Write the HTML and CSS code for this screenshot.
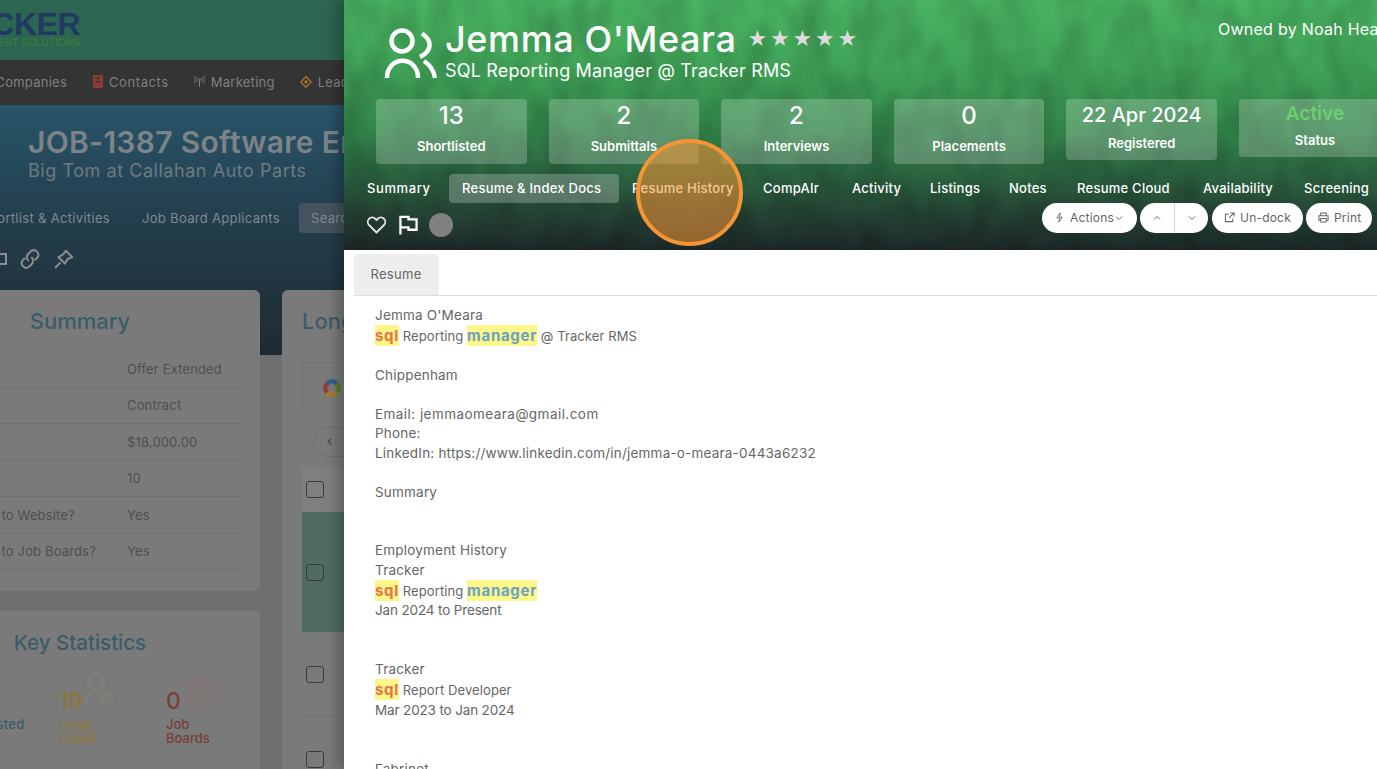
FILE: index.html
```html
<!DOCTYPE html>
<html lang="en">
<head>
<meta charset="utf-8">
<title>Jemma O'Meara</title>
<link rel="stylesheet" href="styles.css">
</head>
<body>
<div class="page">
  <div class="topbar">
    <div class="logo"><span class="logo-main">TRACKER</span><span class="logo-sub">RECRUITMENT SOLUTIONS</span></div>
  </div>
  <nav class="mainnav">
    <span class="nav-cut">Companies</span>
    <span class="nav-item nav-contacts"><svg class="nav-ic" viewBox="0 0 12 14"><path fill="#8d3a36" d="M1 0h10a1 1 0 0 1 1 1v12a1 1 0 0 1-1 1H1zM3.500 3v1.500h5V3zM3.500 6.500V8h5V6.500z"/></svg><span class="nav-wide">Contacts</span></span>
    <span class="nav-item nav-marketing"><svg class="nav-ic" viewBox="0 0 12 12" fill="none" stroke="#8a8a8a" stroke-width="1"><circle cx="6" cy="4" r="1"/><path d="M6 5v7M3.500 1.500a3.500 3.500 0 0 0 0 5M8.500 1.500a3.500 3.500 0 0 1 0 5M1.500 0a6 6 0 0 0 0 8M10.500 0a6 6 0 0 1 0 8"/></svg>Marketing</span>
    <span class="nav-item nav-leads"><svg class="nav-ic nav-ic-lg" viewBox="0 0 12 12" fill="none" stroke="#b0752a" stroke-width="1.300"><path d="M6 .8 11.200 6 6 11.200.8 6z"/><circle cx="6" cy="6" r="1"/></svg>Leads</span>
  </nav>
  <header class="banner">
    <h1 class="job-title">JOB-1387 Software Engineer</h1>
    <p class="job-sub">Big Tom at Callahan Auto Parts</p>
    <div class="job-tabs">
      <span class="job-tab-cut">Shortlist &amp; Activities</span>
      <span class="job-tab">Job Board Applicants</span>
      <span class="job-tab job-tab-on">Search</span>
    </div>
    <div class="job-icons">
      <span class="job-square"></span>
      <svg class="job-ic" viewBox="0 0 24 24" fill="none" stroke="#8a8e91" stroke-width="2.200" stroke-linecap="round"><path d="M10 13.500a5 5 0 0 1 0-7l3-3a5 5 0 0 1 7 7l-2 2"/><path d="M14 10.500a5 5 0 0 1 0 7l-3 3a5 5 0 0 1-7-7l2-2"/></svg>
      <svg class="job-ic" viewBox="0 0 24 24" fill="none" stroke="#8a8e91" stroke-width="2.200" stroke-linejoin="round" stroke-linecap="round"><path d="M14 3l7 7-5 2-3 5-7-7 5-3zM7.500 16.500 3 21"/></svg>
    </div>
  </header>
  <div class="main">
    <div class="col-left">
      <section class="card card-summary">
        <h2 class="card-title">Summary</h2>
        <div class="row"><span class="r-label"></span><span>Offer Extended</span></div>
        <div class="row"><span class="r-label"></span><span>Contract</span></div>
        <div class="row"><span class="r-label"></span><span>$18,000.00</span></div>
        <div class="row"><span class="r-label"></span><span>10</span></div>
        <div class="row"><span class="r-label">Post to Website?</span><span>Yes</span></div>
        <div class="row"><span class="r-label">Post to Job Boards?</span><span>Yes</span></div>
      </section>
      <section class="card card-stats">
        <h2 class="card-title card-title-key">Key Statistics</h2>
        <div class="kstats">
          <div class="kstat k-blue"><span class="k-lab">Shortlisted</span></div>
          <div class="kstat k-yellow">
            <b class="k-num">19</b><span class="k-lab">Long<br>Listed</span>
            <svg class="k-wm k-wm-keys" viewBox="0 0 30 36" fill="none" stroke="#807f78" stroke-width="3"><circle cx="13" cy="9" r="7.500"/><path d="M9 16 1 31"/><circle cx="24" cy="26" r="4.500"/><path d="M17 15l4 7"/></svg>
          </div>
          <div class="kstat k-red">
            <b class="k-num">0</b><span class="k-lab">Job<br>Boards</span>
            <svg class="k-wm k-wm-card" viewBox="0 0 30 33"><path fill="#7f7775" d="M2 0h26a2 2 0 0 1 2 2v26a2 2 0 0 1-2 2H18l-3 3-3-3H2a2 2 0 0 1-2-2V2a2 2 0 0 1 2-2z"/><circle cx="15" cy="11" r="4.500" fill="none" stroke="#757575" stroke-width="2"/><path d="M6 25c1-8 17-8 18 0" fill="none" stroke="#757575" stroke-width="2"/></svg>
          </div>
        </div>
      </section>
    </div>
    <section class="card card-long">
      <h2 class="card-title card-title-left">Long Listed</h2>
      <div class="filter"><span class="ring"><span class="ring-hole"></span></span></div>
      <div class="pager"><span class="pager-btn">‹</span></div>
      <div class="t-row t-head"><span class="check"></span></div>
      <div class="t-row t-sel"><span class="check"></span></div>
      <div class="t-row t-plain"><span class="check"></span></div>
      <div class="t-row t-plain"><span class="check"></span></div>
    </section>
  </div>
</div>

<aside class="drawer">
  <header class="d-head">
    <svg class="crowd" width="1033" height="250" aria-hidden="true">
      <defs>
        <filter id="mottle" x="0" y="0" width="100%" height="100%" color-interpolation-filters="sRGB">
          <feTurbulence type="fractalNoise" baseFrequency="0.035 0.02" numOctaves="2" seed="7"/>
          <feColorMatrix type="matrix" values="0 0 0 0 0  0 0 0 0 0  0 0 0 0 0  .34 0 0 0 -.12"/>
        </filter>
      </defs>
      <rect width="1033" height="250" filter="url(#mottle)"/>
    </svg>
    <div class="d-top">
      <svg class="d-person" viewBox="0 0 60 60" fill="none" stroke="#fff" stroke-width="4.500" stroke-linecap="butt"><circle cx="22" cy="16" r="10.500"/><path d="M42 8.500C53 16 52 26 40 32"/><path d="M7 53C7 30 38 30 38 53"/><path d="M44 36c6 4 10 10 11 17"/></svg>
      <div class="d-id">
        <div class="d-name-row"><h1 class="d-name">Jemma O'Meara</h1><span class="stars">★★★★★</span></div>
        <p class="d-role">SQL Reporting Manager @ Tracker RMS</p>
      </div>
      <span class="d-owner">Owned by Noah Heath</span>
    </div>
    <div class="tiles">
      <div class="tile"><b class="t-num">13</b><span class="t-lab">Shortlisted</span></div>
      <div class="tile"><b class="t-num">2</b><span class="t-lab">Submittals</span></div>
      <div class="tile"><b class="t-num">2</b><span class="t-lab">Interviews</span></div>
      <div class="tile"><b class="t-num">0</b><span class="t-lab">Placements</span></div>
      <div class="tile tile-date"><b class="t-num">22 Apr 2024</b><span class="t-lab">Registered</span></div>
      <div class="tile tile-status"><b class="t-num">Active</b><span class="t-lab">Status</span></div>
    </div>
    <nav class="d-tabs">
      <span class="d-tab">Summary</span>
      <span class="d-tab d-tab-on">Resume &amp; Index Docs</span>
      <span class="d-tab">Resume History</span>
      <span class="d-tab">CompAIr</span>
      <span class="d-tab">Activity</span>
      <span class="d-tab">Listings</span>
      <span class="d-tab">Notes</span>
      <span class="d-tab">Resume Cloud</span>
      <span class="d-tab">Availability</span>
      <span class="d-tab">Screening</span>
    </nav>
    <div class="d-tools">
      <div class="d-icons">
        <svg class="ic-heart" viewBox="0 0 24 24" fill="none" stroke="#e4e4e4" stroke-width="2.200" stroke-linejoin="round"><path d="M12 21 3 12a5.500 5.500 0 0 1 0-7.500 5.300 5.300 0 0 1 7.500 0L12 6l1.500-1.500a5.300 5.300 0 0 1 7.500 0 5.500 5.500 0 0 1 0 7.500z"/></svg>
        <svg class="ic-flag" viewBox="0 0 20 20" fill="none" stroke="#fff" stroke-width="2.400"><path d="M1.500 20V1.500h8.500v2.500h8.500v11H10v-2.500H1.500"/></svg>
        <span class="ic-dot"></span>
      </div>
      <div class="d-btns">
        <span class="pill pill-actions"><svg class="b-ic" viewBox="0 0 12 14" fill="none" stroke="#666" stroke-width="1.100" stroke-linejoin="round"><path d="M7 1 2.500 7.500H6L5 13l4.500-6.500H6z"/></svg>Actions<svg class="b-chev" viewBox="0 0 8 8" fill="none" stroke="#666" stroke-width="1"><path d="M1 2.500 4 5.500 7 2.500"/></svg></span>
        <span class="pill-group"><span class="pg-btn"><svg class="b-chev" viewBox="0 0 8 8" fill="none" stroke="#666" stroke-width="1"><path d="M1 5.500 4 2.500 7 5.500"/></svg></span><span class="pg-btn pg-right"><svg class="b-chev" viewBox="0 0 8 8" fill="none" stroke="#666" stroke-width="1"><path d="M1 2.500 4 5.500 7 2.500"/></svg></span></span>
        <span class="pill pill-undock"><svg class="b-ic" viewBox="0 0 12 12" fill="none" stroke="#666" stroke-width="1.100"><path d="M9.500 7v3.500h-8v-8H5M7 1h4v4M11 1 5.500 6.500"/></svg>Un-dock</span>
        <span class="pill pill-print"><svg class="b-ic" viewBox="0 0 12 12" fill="none" stroke="#666" stroke-width="1.100"><path d="M3 4V1h6v3M3 9H1V4h10v5H9M3 7h6v4H3z"/></svg>Print</span>
      </div>
    </div>
  </header>
  <div class="d-body">
    <div class="doc-tabs"><span class="doc-tab">Resume</span></div>
    <div class="doc">
      <div class="ln">Jemma O'Meara</div>
      <div class="ln ln-hl"><mark class="hl hl-a">sql</mark> Reporting <mark class="hl hl-b">manager</mark> @ Tracker RMS</div>
      <div class="ln"></div>
      <div class="ln">Chippenham</div>
      <div class="ln"></div>
      <div class="ln ln-wide">Email: jemmaomeara@gmail.com</div>
      <div class="ln">Phone:</div>
      <div class="ln">LinkedIn: https://www.linkedin.com/in/jemma-o-meara-0443a6232</div>
      <div class="ln"></div>
      <div class="ln">Summary</div>
      <div class="ln"></div>
      <div class="ln"></div>
      <div class="ln">Employment History</div>
      <div class="ln">Tracker</div>
      <div class="ln ln-hl"><mark class="hl hl-a">sql</mark> Reporting <mark class="hl hl-b">manager</mark></div>
      <div class="ln ln-num">Jan 2024 to Present</div>
      <div class="ln"></div>
      <div class="ln"></div>
      <div class="ln">Tracker</div>
      <div class="ln ln-hl ln-hl2"><mark class="hl hl-a">sql</mark> Report Developer</div>
      <div class="ln ln-num">Mar 2023 to Jan 2024</div>
      <div class="ln"></div>
      <div class="ln"></div>
      <div class="ln">Fabrinet</div>
    </div>
  </div>
</aside>
<div class="spot"></div>
</body>
</html>
```
FILE: styles.css
```css
* { box-sizing: border-box; }
html, body { margin: 0; padding: 0; }
body {
  position: relative;
  width: 1377px;
  height: 769px;
  overflow: hidden;
  font-family: Inter, "Noto Sans", sans-serif;
  background: #6f6f6f;
}

/* dimmed page behind the drawer */
.page { width: 344px; height: 769px; overflow: hidden; background: #6f6f6f; }
.topbar { height: 60px; background: #2c6551; }
.logo { width: 80px; height: 60px; display: flex; flex-direction: column; align-items: flex-end; padding-top: 8px; white-space: nowrap; }
.logo-main { font: 700 32px/32px "Liberation Sans", sans-serif; color: #223a62; letter-spacing: -.5px; }
.logo-sub { font: 400 10px/12px "Liberation Sans", sans-serif; color: #41803c; letter-spacing: .1px; margin-top: -3px; }

.mainnav { height: 45px; background: #343434; display: flex; align-items: center; font-size: 13px; color: #808080; white-space: nowrap; letter-spacing: .25px; padding-bottom: 2px; }
.nav-cut { width: 67px; display: flex; justify-content: flex-end; flex: none; }
.nav-item { display: flex; align-items: center; flex: none; }
.nav-wide { letter-spacing: .6px; }
.nav-contacts { margin-left: 25px; }
.nav-marketing { margin-left: 25px; }
.nav-leads { margin-left: 25px; }
.nav-ic { width: 11px; height: 13px; margin-right: 6px; }
.nav-ic-lg { width: 12px; height: 12px; }

.banner { height: 250px; background: linear-gradient(180deg, #285469 0%, #233d4b 50%, #1f2a33 100%); padding-left: 28px; overflow: hidden; }
.job-title { margin: 19px 0 0; font-size: 30px; line-height: 36px; font-weight: 600; color: #7d8387; white-space: nowrap; letter-spacing: .3px; }
.job-sub { margin: -1px 0 0; font-size: 18px; line-height: 24px; color: #6f7a80; white-space: nowrap; letter-spacing: .55px; }
.job-tabs { display: flex; align-items: center; margin: 20px 0 0 -28px; height: 30px; font-size: 13px; color: #7f8a8e; white-space: nowrap; letter-spacing: .32px; }
.job-tab-cut { width: 110px; flex: none; display: flex; justify-content: flex-end; }
.job-tab { flex: none; margin-left: 32px; }
.job-tab-on { margin-left: 19px; padding: 0 12px; height: 30px; line-height: 30px; border-radius: 4px; background: #44535d; }
.job-icons { display: flex; align-items: center; gap: 12px; margin: 15px 0 0 -28px; }
.job-square { width: 7px; height: 12px; border: 2px solid #8a8e91; border-left: 0; }
.job-ic { width: 22px; height: 22px; flex: none; }

.main { display: flex; gap: 22px; margin: -65px 0 0 -100px; width: 1200px; align-items: flex-start; position: relative; }
.col-left { width: 360px; flex: none; display: flex; flex-direction: column; gap: 20px; }
.card { background: #7a7a7a; border-radius: 6px; }
.card-title { margin: 0; font-size: 22px; line-height: 30px; font-weight: 500; color: #3a5c69; text-align: center; white-space: nowrap; }
.card-title-key { font-size: 20.500px; padding-top: 1px; }
.card-summary { height: 301px; padding: 16px 20px 0; }
.card-summary .card-title { margin-bottom: 15px; }
.row { display: flex; height: 36.500px; align-items: center; border-bottom: 1px solid #717171; font-size: 13px; color: #4f4f4f; white-space: nowrap; letter-spacing: .15px; }
.r-label { width: 207px; flex: none; padding-left: 50px; }
.card-stats { height: 200px; padding: 16px 0 0; }
.kstats { position: relative; display: flex; margin-top: 21px; height: 100px; }
.kstat { position: absolute; top: 6px; display: flex; flex-direction: column; font-size: 13px; line-height: 14px; font-weight: 500; }
.k-blue { left: 54px; top: 38px; color: #3a5c69; letter-spacing: .3px; }
.k-yellow { left: 159px; color: #8a7638; }
.k-red { left: 266px; color: #7a3d38; }
.k-num { font-size: 23px; line-height: 32px; font-weight: 500; }
.k-wm { position: absolute; }
.k-wm-keys { width: 30px; height: 36px; left: 24px; top: -12px; }
.k-wm-card { width: 30px; height: 33px; left: 19px; top: -9px; }

.card-long { flex: 1; height: 520px; padding: 16px 0 0 20px; overflow: hidden; }
.card-title-left { text-align: left; }
.filter { height: 48px; margin-top: 26px; border-left: 1px solid #717171; border-top: 1px solid #717171; padding: 16px 0 0 20px; }
.ring { display: block; width: 18px; height: 18px; border-radius: 50%; background: conic-gradient(#5a7a2e 0 25%, #a87a2a 25% 50%, #963a35 50% 75%, #2f5f93 75%); padding: 5px; transform: rotate(45deg); }
.ring-hole { display: block; width: 8px; height: 8px; background: #7a7a7a; border-radius: 2px; }
.pager { height: 57px; padding: 17px 0 0 11px; }
.pager-btn { display: block; width: 60px; height: 30px; border: 1px solid #6c6c6c; border-radius: 15px; font-size: 14px; line-height: 26px; padding-left: 13px; color: #444; }
.t-row { display: flex; align-items: center; padding-left: 4px; }
.t-head { height: 45px; background: #7f7f7f; }
.t-sel { height: 120px; background: #4f6b62; }
.t-plain { height: 85px; border-bottom: 1px solid #717171; }
.check { width: 18px; height: 17px; border: 1px solid #3a3a3a; border-radius: 3px; }

/* drawer */
.drawer { position: absolute; left: 344px; top: 0; width: 1033px; height: 769px; overflow: hidden; background: #fff; box-shadow: -6px 0 12px rgba(0, 0, 0, .25); }
.d-head { position: relative; height: 250px; overflow: hidden; background: linear-gradient(180deg, #49b361 0%, #40a458 26%, #328549 52%, #2b6340 70%, #254335 86%, #1d2829 100%); color: #fff; }
.crowd { position: absolute; left: 0; top: 0; }
.d-top { position: relative; display: flex; height: 99px; padding: 25px 0 0 36px; white-space: nowrap; }
.d-person { width: 60px; height: 60px; flex: none; }
.d-id { width: 778px; flex: none; padding-left: 5px; margin-top: -8px; }
.d-name-row { display: flex; align-items: center; }
.d-name { margin: 0; font-size: 36px; line-height: 44px; font-weight: 500; letter-spacing: .6px; }
.stars { margin-left: 11px; font-size: 22px; line-height: 30px; letter-spacing: 2.800px; color: #dcdcdc; font-family: "DejaVu Sans", sans-serif; }
.d-role { margin: -2px 0 0; font-size: 18px; line-height: 24px; font-weight: 400; letter-spacing: .17px; }
.d-owner { flex: none; font-size: 16px; line-height: 20px; margin-top: -6px; letter-spacing: .25px; }

.tiles { position: relative; display: flex; gap: 22px; padding-left: 32px; align-items: flex-start; }
.tile { flex: none; width: 150.600px; height: 65px; border-radius: 4px; background: rgba(255, 255, 255, .22); display: flex; flex-direction: column; align-items: center; padding-top: 1px; }
.t-num { font-size: 24px; line-height: 32px; font-weight: 500; }
.t-lab { font-size: 13px; line-height: 20px; font-weight: 600; margin-top: 4px; }
.tile-date { height: 61px; }
.tile-date .t-num { font-size: 20px; line-height: 30px; }
.tile-date .t-lab { margin-top: 3px; }
.tile-status { height: 58px; width: 152px; }
.tile-status .t-num { font-size: 19px; line-height: 28px; font-weight: 600; color: #6ccf71; }
.tile-status .t-lab { margin-top: 2px; }

.d-tabs { position: relative; display: grid; grid-template-columns: 95px 170px 131px 89px 78px 79px 68px 126px 101px auto; margin-top: 10px; padding-left: 10px; height: 29px; font-size: 13px; font-weight: 500; white-space: nowrap; }
.d-tab { display: flex; align-items: center; padding: 0 0 2px 13px; border-radius: 4px; letter-spacing: .25px; }
.d-tab:first-child { letter-spacing: .6px; }
.d-tab-on { background: rgba(255, 255, 255, .24); }
.d-tools { position: relative; display: flex; justify-content: space-between; align-items: flex-start; padding: 0 5px 0 22px; }
.d-icons { display: flex; align-items: center; margin-top: 10px; }
.ic-heart { width: 21px; height: 20px; }
.ic-flag { width: 19px; height: 20px; margin-left: 12px; }
.ic-dot { width: 24px; height: 24px; border-radius: 50%; background: #808080; margin-left: 11px; }
.d-btns { display: flex; gap: 3px; font-size: 12px; color: #666; letter-spacing: .2px; }
.pill, .pill-group { height: 30px; background: #fff; border-radius: 15px; display: flex; align-items: center; white-space: nowrap; flex: none; padding-bottom: 1px; }
.pill-actions { width: 95px; padding-left: 12px; }
.pill-group { width: 68px; margin-right: 1px; padding-bottom: 0; }
.pill-undock { width: 91px; padding-left: 12px; }
.pill-print { width: 66px; padding-left: 12px; }
.pg-btn { flex: 1; height: 100%; display: flex; align-items: center; justify-content: center; }
.pg-right { border-left: 1px solid #d5d5d5; }
.b-ic { width: 11px; height: 11px; margin-right: 5px; flex: none; }
.b-chev { width: 8px; height: 8px; flex: none; margin-left: 1px; }

.d-body { padding: 4px 0 0 10px; }
.doc-tabs { height: 42px; border-bottom: 1px solid #dcdcdc; }
.doc-tab { display: block; width: 85px; height: 41px; background: #eee; border-radius: 4px 4px 0 0; font-size: 13px; line-height: 40px; text-align: center; color: #666; letter-spacing: .3px; padding-right: 1px; }
.doc { padding: 9.500px 0 0 21px; font-size: 13.500px; color: #666; white-space: nowrap; letter-spacing: .2px; }
.ln { height: 19.500px; line-height: 19.500px; }
.ln-hl { height: 21px; line-height: 21px; font-size: 13px; letter-spacing: .1px; }
.ln-hl2 { height: 22px; }
.ln-wide { letter-spacing: .45px; }
.ln-num { letter-spacing: -.15px; }
.hl { display: inline-block; height: 21px; background: #fdf688; font-size: 15px; font-weight: 700; line-height: 21px; letter-spacing: .7px; }
.hl-a { color: #e8734a; }
.hl-b { color: #6ba3c4; }

/* tutorial highlight ring */
.spot { position: absolute; left: 636px; top: 139px; width: 107px; height: 107px; border-radius: 50%; border: 4px solid #f79535; background: rgba(247, 149, 53, .55); }
```
